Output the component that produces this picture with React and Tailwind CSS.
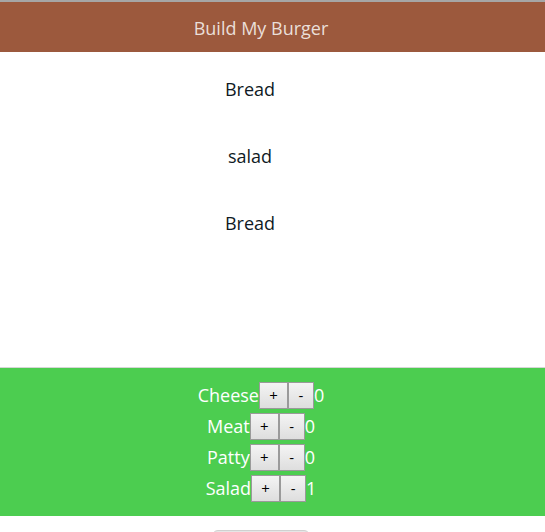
import { useState } from 'react';

const ingredients = ['Cheese', 'Meat', 'Patty', 'Salad'];

function App() {
  const [counts, setCounts] = useState({ Cheese: 0, Meat: 0, Patty: 0, Salad: 1 });

  const change = (name, d) =>
    setCounts((c) => ({ ...c, [name]: Math.max(0, c[name] + d) }));

  return (
    <div className="min-h-screen bg-white font-['Open_Sans',sans-serif] text-[18px]">
      {/* Header */}
      <header className="border-t-2 border-[#a6a6a6] bg-[#9c593d] h-[52px] flex items-center justify-center pr-[23px] pt-[3px]">
        <h1 className="text-[#eadfd9] text-[18px]">Build My Burger</h1>
      </header>

      {/* Burger preview */}
      <div className="h-[315px] flex flex-col items-center pt-[24px] pr-[45px] gap-[40px] text-[#0f1a24]">
        <div className="h-[27px] leading-[27px]">Bread</div>
        <div className="h-[27px] leading-[27px]">salad</div>
        <div className="h-[27px] leading-[27px]">Bread</div>
      </div>

      {/* Controls */}
      <div className="border-t border-[#d6d6d6] bg-[#4ccd50] py-[12px] pr-[23px] flex flex-col items-center text-white">
        {ingredients.map((name) => (
          <div key={name} className="h-[31px] flex items-center">
            <span>{name}</span>
            <button
              onClick={() => change(name, 1)}
              className="w-[29px] h-[27px] border border-[#9a9a9a] bg-gradient-to-b from-[#f4f4f4] to-[#dedede] text-black text-[15px] leading-none"
            >
              +
            </button>
            <button
              onClick={() => change(name, -1)}
              className="w-[26px] h-[27px] border border-[#9a9a9a] bg-gradient-to-b from-[#f4f4f4] to-[#dedede] text-black text-[15px] leading-none"
            >
              -
            </button>
            <span>{counts[name]}</span>
          </div>
        ))}
      </div>

      <div className="flex justify-center pt-[14px] pr-[23px]">
        <button className="w-[98px] h-[30px] rounded-[6px] bg-[#e6e6e6] border border-[#d0d0d0]" />
      </div>
    </div>
  );
}

export default App;
